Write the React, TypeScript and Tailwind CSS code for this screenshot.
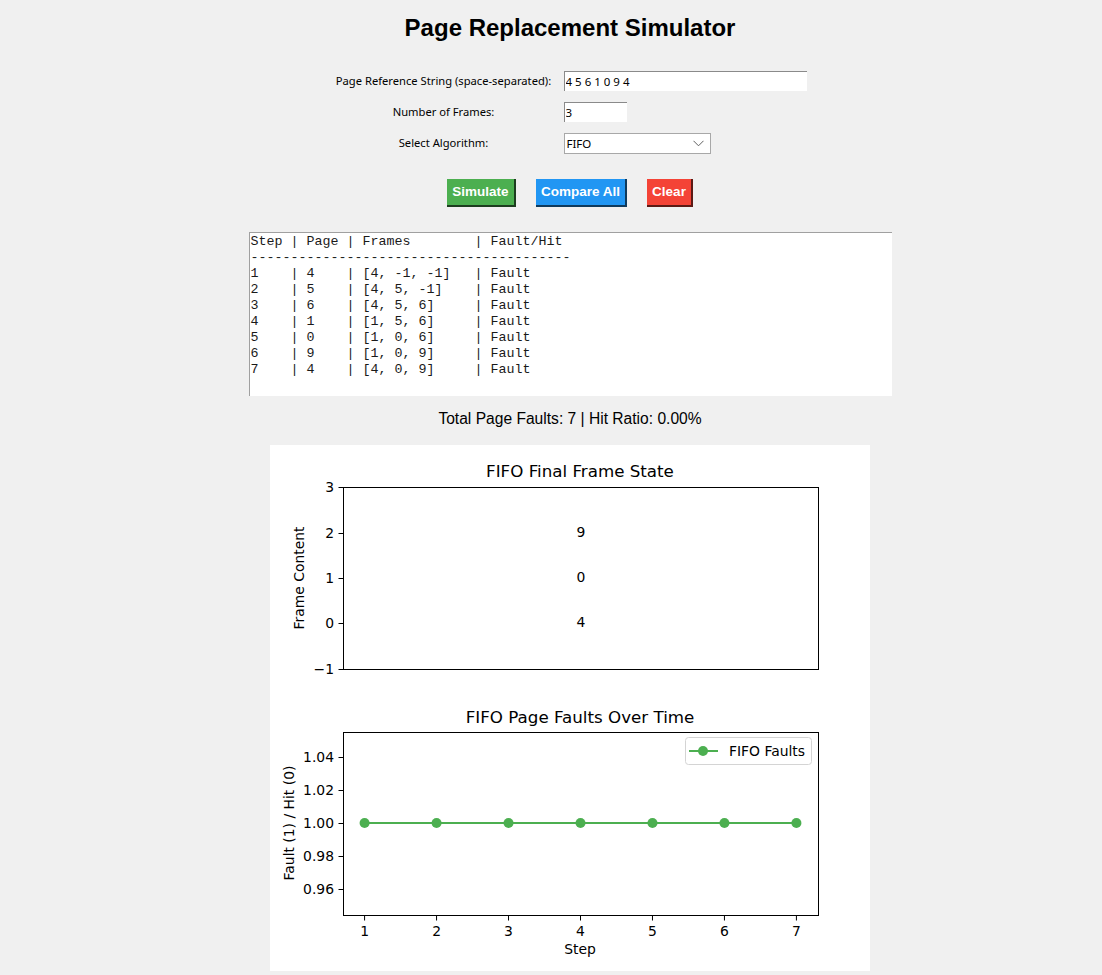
const refs = [4, 5, 6, 1, 0, 9, 4];

const rows = [
  ['1', '4', '[4, -1, -1]'],
  ['2', '5', '[4, 5, -1]'],
  ['3', '6', '[4, 5, 6]'],
  ['4', '1', '[1, 5, 6]'],
  ['5', '0', '[1, 0, 6]'],
  ['6', '9', '[1, 0, 9]'],
  ['7', '4', '[4, 0, 9]'],
];

const log = [
  'Step | Page | Frames        | Fault/Hit',
  '-'.repeat(40),
  ...rows.map(([s, p, f]) => `${s.padEnd(5)}| ${p.padEnd(5)}| ${f.padEnd(14)}| Fault`),
].join('\n');

const green = '#4caf50';
const mpl = "'DejaVu Sans', sans-serif";

function FrameChart() {
  const ys = [
    { v: '3', y: 42 },
    { v: '2', y: 88 },
    { v: '1', y: 133 },
    { v: '0', y: 178 },
    { v: '\u22121', y: 224 },
  ];
  return (
    <g>
      <text x={310} y={32} textAnchor="middle" fontSize={16.7}>FIFO Final Frame State</text>
      <rect x={73.5} y={42.5} width={475} height={182} fill="none" stroke="#000" strokeWidth={1} />
      {ys.map((t) => (
        <g key={t.v}>
          <line x1={68.5} x2={73.5} y1={t.y + 0.5} y2={t.y + 0.5} stroke="#000" />
          <text x={64} y={t.y + 5} textAnchor="end" fontSize={13.9}>{t.v}</text>
        </g>
      ))}
      <text x={311} y={92} textAnchor="middle" fontSize={13.9}>9</text>
      <text x={311} y={137} textAnchor="middle" fontSize={13.9}>0</text>
      <text x={311} y={182} textAnchor="middle" fontSize={13.9}>4</text>
      <text transform="translate(34 133) rotate(-90)" textAnchor="middle" fontSize={13.9}>Frame Content</text>
    </g>
  );
}

function FaultChart() {
  const ys = [
    { v: '1.04', y: 312 },
    { v: '1.02', y: 345 },
    { v: '1.00', y: 378 },
    { v: '0.98', y: 411 },
    { v: '0.96', y: 444 },
  ];
  const xs = refs.map((_, i) => 73 + (i + 1 - 0.7) * 71.97);
  return (
    <g>
      <text x={310} y={278} textAnchor="middle" fontSize={16.7}>FIFO Page Faults Over Time</text>
      <rect x={73.5} y={287.5} width={475} height={183} fill="none" stroke="#000" strokeWidth={1} />
      {ys.map((t) => (
        <g key={t.v}>
          <line x1={68.5} x2={73.5} y1={t.y + 0.5} y2={t.y + 0.5} stroke="#000" />
          <text x={64} y={t.y + 5} textAnchor="end" fontSize={13.9}>{t.v}</text>
        </g>
      ))}
      {xs.map((x, i) => (
        <g key={i}>
          <line x1={x} x2={x} y1={470.5} y2={475.5} stroke="#000" />
          <text x={x} y={491} textAnchor="middle" fontSize={13.9}>{i + 1}</text>
        </g>
      ))}
      <text x={310} y={509} textAnchor="middle" fontSize={13.9}>Step</text>
      <text transform="translate(24 378) rotate(-90)" textAnchor="middle" fontSize={13.9}>Fault (1) / Hit (0)</text>
      <polyline points={xs.map((x) => `${x},378`).join(' ')} fill="none" stroke={green} strokeWidth={2} />
      {xs.map((x, i) => (
        <circle key={i} cx={x} cy={378} r={5} fill={green} />
      ))}
      <rect x={415.5} y={292.5} width={126} height={27} rx={3} fill="#fff" fillOpacity={0.8} stroke="#d4d4d4" />
      <line x1={419} x2={448} y1={306} y2={306} stroke={green} strokeWidth={2} />
      <circle cx={433} cy={306} r={5} fill={green} />
      <text x={459} y={311} fontSize={13.9}>FIFO Faults</text>
    </g>
  );
}

export default function App() {
  return (
    <div className="min-h-screen bg-[#f0f0f0] pl-[38px] pb-[5px] text-black">
      <div className="flex flex-col items-center">
        <h1 className="mt-[14px] font-['Liberation_Sans',Arial,sans-serif] text-[24px] font-bold leading-[28px]">
          Page Replacement Simulator
        </h1>

        <div className="mt-[29px] grid grid-cols-[234px_253px] items-center gap-y-[11px] font-['Noto_Sans',sans-serif] text-[11.2px]">
          <label className="text-center">Page Reference String (space-separated):</label>
          <div className="pl-[3px]">
            <input
              defaultValue="4 5 6 1 0 9 4"
              className="h-[20px] w-[243px] border-l border-t border-[#8a8a8a] bg-white px-[1px] text-[11.5px] outline-none"
            />
          </div>
          <label className="text-center">Number of Frames:</label>
          <div className="pl-[3px]">
            <input
              defaultValue="3"
              className="h-[20px] w-[63px] border-l border-t border-[#8a8a8a] bg-white px-[1px] text-[11.5px] outline-none"
            />
          </div>
          <label className="text-center">Select Algorithm:</label>
          <div className="pl-[3px]">
            <div className="flex h-[21px] w-[147px] items-center justify-between border border-[#a8a8a8] bg-white pl-[2px] pr-[6px] text-[11.5px]">
              <span>FIFO</span>
              <svg width="11" height="7" viewBox="0 0 11 7" fill="none" stroke="#606060" strokeWidth="1">
                <path d="M0.5 0.8 L5.5 5.8 L10.5 0.8" />
              </svg>
            </div>
          </div>
        </div>

        <div className="mt-[25px] flex gap-[20px] font-['Liberation_Sans',Arial,sans-serif] text-[13.5px] font-bold text-white">
          <button className="h-[28px] w-[69px] border-b-2 border-r-2 border-b-[#1d3d1f] border-r-[#1d3d1f] bg-[#4caf50]">Simulate</button>
          <button className="h-[28px] w-[91px] border-b-2 border-r-2 border-b-[#0f3a5c] border-r-[#0f3a5c] bg-[#2196f3]">Compare All</button>
          <button className="h-[28px] w-[46px] border-b-2 border-r-2 border-b-[#5c1a15] border-r-[#5c1a15] bg-[#f44336]">Clear</button>
        </div>

        <pre className="mt-[25px] h-[164px] w-[643px] overflow-hidden border-l border-t border-[#a0a0a0] bg-white pl-[1px] pt-[1px] font-['Liberation_Mono','Courier_New',monospace] text-[13.33px] leading-[16px] text-[#1a1a1a]">
          {log}
        </pre>

        <p className="mt-[13px] font-['Liberation_Sans',Arial,sans-serif] text-[15.6px] leading-[19px]">
          Total Page Faults: 7 | Hit Ratio: 0.00%
        </p>

        <div className="mt-[17px] h-[526px] w-[600px] bg-white">
          <svg width="600" height="526" viewBox="0 0 600 526" fontFamily={mpl} fill="#000">
            <FrameChart />
            <FaultChart />
          </svg>
        </div>
      </div>
    </div>
  );
}
